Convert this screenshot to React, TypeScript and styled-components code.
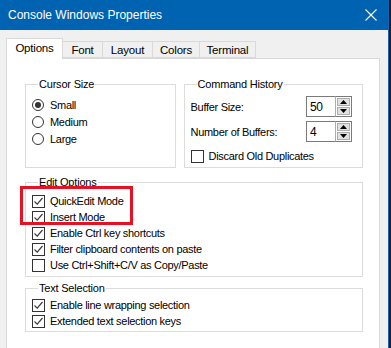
import React from 'react';
import styled, { createGlobalStyle } from 'styled-components';

const GlobalStyle = createGlobalStyle`
  html, body {
    margin: 0;
    padding: 0;
    background: #1f1f1f;
  }
  body {
    font-family: "Liberation Sans", Arial, sans-serif;
    font-size: 11px;
    color: #000;
  }
`

const Dialog = styled.div`
  width: 388px;
  height: 348px;
  background: #f0f0f0;
  border-right: 1px solid #1a5fb4;
  display: flex;
  flex-direction: column;
  overflow: hidden;
`

const TitleBar = styled.div`
  height: 30px;
  flex: none;
  background: #0063b1;
  color: #fff;
  display: flex;
  align-items: center;
  justify-content: space-between;
  padding: 0 10px 0 8px;
  font-family: "Liberation Sans", Arial, sans-serif;
  font-size: 12px;
`

const CloseButton = styled.div`
  width: 14px;
  height: 14px;
  display: flex;
  align-items: center;
  justify-content: center;
`

const Body = styled.div`
  padding: 7px 8px 0 6px;
  display: flex;
  flex-direction: column;
  flex: 1;
`

const TabStrip = styled.div`
  display: flex;
  align-items: flex-end;
  height: 21px;
  position: relative;
  z-index: 1;
`

const Tab = styled.div<{ $active?: boolean; $width: number }>`
  width: ${p => p.$width}px;
  box-sizing: border-box;
  height: ${p => (p.$active ? 21 : 17)}px;
  margin-bottom: ${p => (p.$active ? -1 : 0)}px;
  background: ${p => (p.$active ? '#fff' : '#f0f0f0')};
  border: 1px solid #d9d9d9;
  border-bottom: ${p => (p.$active ? 'none' : '1px solid #d9d9d9')};
  margin-left: ${p => (p.$active ? 0 : -1)}px;
  display: flex;
  justify-content: center;
  padding-top: ${p => (p.$active ? 3 : 2)}px;
  font-size: 11.5px;
  letter-spacing: -0.2px;
  &:first-child { margin-left: 0; }
`

const Panel = styled.div`
  flex: 1;
  background: #fff;
  border: 1px solid #d9d9d9;
  border-bottom: none;
  padding: 19px 16px 0 18px;
  display: flex;
  flex-direction: column;
`

const TopRow = styled.div`
  display: flex;
  gap: 8px;
`

const Group = styled.fieldset<{ $width?: number; $height: number; $mt?: number; $pt?: number }>`
  position: relative;
  box-sizing: border-box;
  width: ${p => (p.$width ? `${p.$width}px` : 'auto')};
  height: ${p => p.$height}px;
  margin: ${p => p.$mt ?? 0}px 0 0 0;
  padding: ${p => p.$pt ?? 5}px 5px 0 6px;
  border: 1px solid #dcdcdc;
  min-width: 0;
  display: flex;
  flex-direction: column;
`

const Legend = styled.legend`
  padding: 0 1px;
  margin-left: 6px;
  font-size: 11px;
  letter-spacing: -0.2px;
  line-height: 13px;
`

const OptionRow = styled.label<{ $h?: number }>`
  display: flex;
  align-items: center;
  height: ${p => p.$h ?? 16}px;
  gap: 5px;
  font-size: 11px;
  letter-spacing: -0.3px;
  white-space: nowrap;
`

const Box = styled.span`
  width: 13px;
  height: 13px;
  box-sizing: border-box;
  border: 1px solid #333;
  background: #fff;
  flex: none;
  display: flex;
  align-items: center;
  justify-content: center;
`

const RadioCircle = styled.span<{ $on?: boolean }>`
  width: 12px;
  height: 12px;
  box-sizing: border-box;
  border: 1px solid #333;
  border-radius: 50%;
  background: #fff;
  flex: none;
  display: flex;
  align-items: center;
  justify-content: center;
  margin-right: 1px;
  &::after {
    content: '';
    display: ${p => (p.$on ? 'block' : 'none')};
    width: 6px;
    height: 6px;
    border-radius: 50%;
    background: #333;
  }
`

const FieldRow = styled.div`
  display: flex;
  align-items: center;
  justify-content: space-between;
  height: 21px;
  margin-bottom: 4px;
  padding-right: 5px;
  font-size: 11px;
  letter-spacing: -0.3px;
`

const Spin = styled.div`
  display: flex;
  height: 21px;
`

const SpinInput = styled.div`
  width: 29px;
  box-sizing: border-box;
  border: 1px solid #7a7a7a;
  border-right: none;
  background: #fff;
  padding: 3px 0 0 3px;
  font-size: 12px;
`

const SpinButtons = styled.div`
  width: 17px;
  box-sizing: border-box;
  border: 1px solid #7a7a7a;
  border-left: 1px solid #adadad;
  display: flex;
  flex-direction: column;
  background: #fff;
  padding: 1px;
  gap: 1px;
`

const SpinBtn = styled.div`
  flex: 1;
  background: #e1e1e1;
  border: 1px solid #adadad;
  display: flex;
  align-items: center;
  justify-content: center;
`

const DiscardRow = styled.div`
  margin-top: 2px;
`

const Highlight = styled.div`
  position: absolute;
  left: -6px;
  top: -3px;
  width: 113px;
  height: 39px;
  box-sizing: border-box;
  border: 3px solid #e81123;
  pointer-events: none;
`

function Check({ on }: { on?: boolean }) {
  return (
    <Box>
      {on && (
        <svg width="11" height="11" viewBox="0 0 11 11">
          <path d="M1.5 5.5 L4.2 8.2 L9.5 2" fill="none" stroke="#3c3c3c" strokeWidth="1.2" />
        </svg>
      )}
    </Box>
  );
}

function CheckOption({ on, label }: { on?: boolean; label: string }) {
  return (
    <OptionRow>
      <Check on={on} />
      <span>{label}</span>
    </OptionRow>
  );
}

function Arrow({ up }: { up?: boolean }) {
  return (
    <svg width="7" height="4" viewBox="0 0 7 4">
      <path d={up ? 'M0 4 L3.5 0 L7 4 Z' : 'M0 0 L3.5 4 L7 0 Z'} fill="#000" />
    </svg>
  );
}

function Spinner({ value }: { value: string }) {
  return (
    <Spin>
      <SpinInput>{value}</SpinInput>
      <SpinButtons>
        <SpinBtn><Arrow up /></SpinBtn>
        <SpinBtn><Arrow /></SpinBtn>
      </SpinButtons>
    </Spin>
  );
}

const tabs = [
  { name: 'Options', w: 57 },
  { name: 'Font', w: 41 },
  { name: 'Layout', w: 51 },
  { name: 'Colors', w: 48 },
  { name: 'Terminal', w: 57 },
];

export default function App() {
  return (
    <>
      <GlobalStyle />
      <Dialog>
        <TitleBar>
          <span>Console Windows Properties</span>
          <CloseButton>
            <svg width="12" height="12" viewBox="0 0 12 12">
              <path d="M0.5 0.5 L11.5 11.5 M11.5 0.5 L0.5 11.5" stroke="#fff" strokeWidth="1.1" />
            </svg>
          </CloseButton>
        </TitleBar>
        <Body>
          <TabStrip>
            {tabs.map((t, i) => (
              <Tab key={t.name} $active={i === 0} $width={t.w}>{t.name}</Tab>
            ))}
          </TabStrip>
          <Panel>
            <TopRow>
              <Group $width={151} $height={90}>
                <Legend>Cursor Size</Legend>
                <OptionRow $h={17}><RadioCircle $on />Small</OptionRow>
                <OptionRow $h={17}><RadioCircle />Medium</OptionRow>
                <OptionRow $h={17}><RadioCircle />Large</OptionRow>
              </Group>
              <Group $width={180} $height={90}>
                <Legend>Command History</Legend>
                <FieldRow>
                  <span>Buffer Size:</span>
                  <Spinner value="50" />
                </FieldRow>
                <FieldRow>
                  <span>Number of Buffers:</span>
                  <Spinner value="4" />
                </FieldRow>
                <DiscardRow>
                  <CheckOption label="Discard Old Duplicates" />
                </DiscardRow>
              </Group>
            </TopRow>
            <Group $height={101} $mt={8} $pt={4}>
              <Legend>Edit Options</Legend>
              <CheckOption on label="QuickEdit Mode" />
              <CheckOption on label="Insert Mode" />
              <CheckOption on label="Enable Ctrl key shortcuts" />
              <CheckOption on label="Filter clipboard contents on paste" />
              <CheckOption label="Use Ctrl+Shift+C/V as Copy/Paste" />
              <Highlight />
            </Group>
            <Group $height={50} $mt={5} $pt={2}>
              <Legend>Text Selection</Legend>
              <CheckOption on label="Enable line wrapping selection" />
              <CheckOption on label="Extended text selection keys" />
            </Group>
          </Panel>
        </Body>
      </Dialog>
    </>
  );
}
